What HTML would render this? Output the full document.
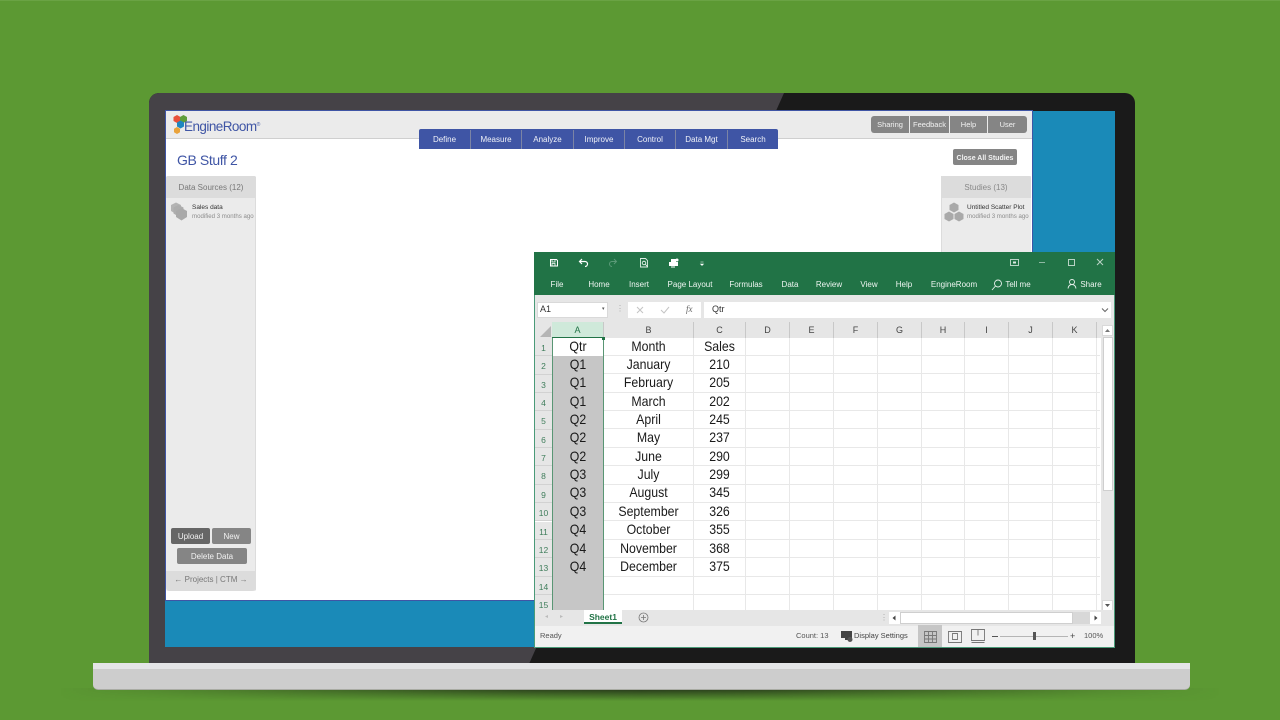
<!DOCTYPE html>
<html><head><meta charset="utf-8"><style>
*{box-sizing:border-box}
html,body{margin:0;padding:0}
body{width:1280px;height:720px;position:relative;overflow:hidden;background:#5c9933;font-family:"Liberation Sans",sans-serif}
.a,.t{position:absolute}
.t{white-space:nowrap;line-height:1}
.c{transform:translateX(-50%)}
.btn{position:absolute;background:#858585;color:#f2f2f2;font-size:7.5px;font-weight:400;text-align:center;border-radius:2px}
.nav{position:absolute;top:130px;height:19px;line-height:20px;color:#f0f2f8;font-size:8px;text-align:center;border-right:1px solid #7b84a5}
.rib{position:absolute;top:285px;transform:translate(-50%,-50%);font-size:8px;color:#eef5f1;white-space:nowrap;line-height:1}
.h{position:absolute;top:322px;height:16px;line-height:17px;text-align:center;font-size:9px;color:#444;background:#e6e6e6;border-right:1px solid #c8c8c8}
.rn{position:absolute;left:535px;width:17px;height:18.35px;background:#e6e6e6;color:#3f7d5b;font-size:8.5px;text-align:center;line-height:20px;border-bottom:1px solid #d2d2d2}
.q,.m,.s{position:absolute;height:18px;line-height:17px;text-align:center;font-size:14px;color:#1a1a1a;transform:scaleX(.88)}
.q{left:553px;width:50px}
.m{left:604px;width:89px}
.s{left:694px;width:51px}
.hl{position:absolute;left:604px;width:496px;height:1px;background:#e8e8e8}
.vl{position:absolute;top:338px;height:272px;width:1px;background:#e8e8e8}
</style></head><body>

<!-- shadow -->
<div class="a" style="left:60px;top:688px;width:1160px;height:13px;background:linear-gradient(to bottom,#2a3f1c 0%,#2a3f1c 15%,rgba(42,63,28,0) 100%);-webkit-mask-image:linear-gradient(to right,transparent 0%,rgba(0,0,0,.15) 8%,rgba(0,0,0,.9) 40%,#000 50%,rgba(0,0,0,.9) 60%,rgba(0,0,0,.15) 90%,transparent 100%);mask-image:linear-gradient(to right,transparent 0%,rgba(0,0,0,.15) 8%,rgba(0,0,0,.9) 40%,#000 50%,rgba(0,0,0,.9) 60%,rgba(0,0,0,.15) 90%,transparent 100%)"></div>
<div class="a" style="left:0;top:0;width:1280px;height:1px;background:#6aa344"></div>

<!-- laptop bezel -->
<svg class="a" style="left:149px;top:93px" width="986" height="571" viewBox="0 0 986 571">
<path d="M10 0H976a10 10 0 0 1 10 10V571H0V10A10 10 0 0 1 10 0Z" fill="#1a1a1a"/>
<path d="M10 0H635L380 571H0V10A10 10 0 0 1 10 0Z" fill="#454247"/>
</svg>
<!-- base -->
<div class="a" style="left:93px;top:663px;width:1097px;height:27px;background:#cdcdcd;border-radius:0 0 5px 5px;border-bottom:1px solid #a9aba3"></div>
<div class="a" style="left:93px;top:663px;width:1097px;height:6px;background:#e4e5e7"></div>

<!-- screen -->
<div class="a" style="left:165px;top:111px;width:950px;height:536px;background:#1a8ab8"></div>

<!-- app -->
<div class="a" style="left:165px;top:110px;width:868px;height:491px;background:#fff;border:1px solid #3f55a5"></div>
<div class="a" style="left:166px;top:111px;width:866px;height:28px;background:#ebebeb;border-bottom:1px solid #cfcfcf"></div>

<!-- logo -->
<svg class="a" style="left:172px;top:114px" width="22" height="22" viewBox="0 0 22 22">
<polygon points="5,1 8.500,3 8.500,7 5,9 1.500,7 1.500,3" fill="#e8503a"/>
<polygon points="11.500,1 15,3 15,7 11.500,9 8,7 8,3" fill="#5f9e3a"/>
<polygon points="8.500,6.500 12,8.500 12,12.500 8.500,14.500 5,12.500 5,8.500" fill="#1f87c0"/>
<polygon points="5,13 8,14.800 8,18.200 5,20 2,18.200 2,14.800" fill="#e9a23a"/>
</svg>
<div class="t" style="left:184px;top:120px;font-size:13.5px;color:#3f55a5;letter-spacing:-.55px">EngineRoom<span style="font-size:5px;vertical-align:5px">®</span></div>

<div class="t" style="left:177px;top:153px;font-size:14px;color:#3f55a5;letter-spacing:-.4px">GB Stuff 2</div>

<!-- nav -->
<div class="a" style="left:419px;top:129px;width:359px;height:20px;background:#3f55a5;border-radius:2px 2px 0 0"></div>
<div class="nav" style="left:419px;width:52px">Define</div>
<div class="nav" style="left:471px;width:51px">Measure</div>
<div class="nav" style="left:522px;width:52px">Analyze</div>
<div class="nav" style="left:574px;width:51px">Improve</div>
<div class="nav" style="left:625px;width:51px">Control</div>
<div class="nav" style="left:676px;width:52px">Data Mgt</div>
<div class="nav" style="left:728px;width:50px;border-right:0">Search</div>

<!-- top right buttons -->
<div class="btn" style="left:871px;top:116px;width:38px;height:17px;line-height:18px;border-radius:3px 0 0 3px">Sharing</div>
<div class="btn" style="left:910px;top:116px;width:39px;height:17px;line-height:18px;border-radius:0">Feedback</div>
<div class="btn" style="left:950px;top:116px;width:37px;height:17px;line-height:18px;border-radius:0">Help</div>
<div class="btn" style="left:988px;top:116px;width:39px;height:17px;line-height:18px;border-radius:0 3px 3px 0">User</div>
<div class="btn" style="left:953px;top:149px;width:64px;height:16px;line-height:16px;font-weight:700;font-size:7px;white-space:nowrap;padding-top:1px"><span style="position:relative;top:1px">Close All Studies</span></div>

<!-- left panel -->
<div class="a" style="left:166px;top:176px;width:90px;height:415px;background:#ebebeb;border-radius:2px;border-right:1px solid #dcdcdc"></div>
<div class="a" style="left:166px;top:176px;width:90px;height:22px;background:#dcdcdc;border-radius:2px 2px 0 0"></div>
<div class="t c" style="left:211px;top:184px;font-size:8px;color:#777">Data Sources (12)</div>
<svg class="a" style="left:170px;top:202px" width="20" height="20" viewBox="0 0 20 20">
<polygon points="6,0.500 11,3 11,9 6,12 1,9 1,3" fill="#b4b4b4"/>
<polygon points="8.500,3 13.500,5.500 13.500,11.500 8.500,14.500 3.500,11.500 3.500,5.500" fill="#adadad"/>
<polygon points="11.500,6 17,9 17,15 11.500,18.500 6,15 6,9" fill="#a9a9a9"/>
</svg>
<div class="t" style="left:192px;top:205px;font-size:6.5px;color:#333">Sales data</div>
<div class="t" style="left:192px;top:214px;font-size:6.1px;color:#8c8c8c">modified 3 months ago</div>
<div class="btn" style="left:171px;top:528px;width:39px;height:16px;line-height:18px;background:#666;font-size:8px">Upload</div>
<div class="btn" style="left:212px;top:528px;width:39px;height:16px;line-height:18px;font-size:8px">New</div>
<div class="btn" style="left:177px;top:548px;width:70px;height:16px;line-height:18px;font-size:8px">Delete Data</div>
<div class="a" style="left:166px;top:571px;width:90px;height:20px;background:#dcdcdc;border-radius:0 0 4px 4px"></div>
<div class="t c" style="left:211px;top:576px;font-size:8px;color:#777">← Projects | CTM →</div>

<!-- right panel -->
<div class="a" style="left:941px;top:176px;width:90px;height:80px;background:#ebebeb;border-left:1px solid #dcdcdc"></div>
<div class="a" style="left:941px;top:176px;width:90px;height:22px;background:#dcdcdc;border-radius:2px 2px 0 0"></div>
<div class="t c" style="left:986px;top:184px;font-size:8px;color:#888">Studies (13)</div>
<svg class="a" style="left:943px;top:202px" width="22" height="20" viewBox="0 0 22 20">
<polygon points="11,0.500 15.500,3 15.500,8 11,10.500 6.500,8 6.500,3" fill="#a9a9a9"/>
<polygon points="6,9.500 10.500,12 10.500,17 6,19.500 1.500,17 1.500,12" fill="#a9a9a9"/>
<polygon points="16,9.500 20.500,12 20.500,17 16,19.500 11.500,17 11.500,12" fill="#a9a9a9"/>
</svg>
<div class="t" style="left:967px;top:205px;font-size:6.5px;color:#333">Untitled Scatter Plot</div>
<div class="t" style="left:967px;top:214px;font-size:6.1px;color:#8c8c8c">modified 3 months ago</div>

<!-- EXCEL -->
<div class="a" style="left:534px;top:252px;width:581px;height:396px;background:#fff;border:1px solid #4a9a78;border-top:0"></div>
<div class="a" style="left:534px;top:252px;width:581px;height:43px;background:#217346"></div>

<!-- QAT icons -->
<svg class="a" style="left:534px;top:252px" width="190" height="20" viewBox="0 0 190 20" fill="none" stroke="#fff" stroke-width="1">
<path d="M16.500 7.500h6l1 1v5.500h-7z"/><path d="M18 8v2h3V8M18 14v-2.500h3V14" stroke-width=".8"/>
<path d="M46 9.500h5a2.500 2.500 0 0 1 0 5M48 7l-2.500 2.500L48 12" stroke-width="1.200"/>
<path d="M82 9.500h-4a2.500 2.500 0 0 0 0 5M80 7l2.500 2.500L80 12" stroke="#5b9a78"/>
<path d="M106.500 6.500h5l2 2v6.500h-7z" stroke="#dfeee6" stroke-width=".9"/><circle cx="110" cy="11" r="1.800" stroke-width=".8"/><path d="M111.500 12.500l2 2" stroke-width=".8"/>
<path d="M135 10h9v4h-9z M137 7h5v3h-5z" fill="#fff" stroke="none"/><circle cx="143" cy="8" r="1.500" fill="#fff" stroke="none"/><path d="M137 15h4" stroke-width="1"/>
<path d="M166.500 10h3M166.500 12h3l-1.500 1.500z" stroke-width=".6" fill="#fff"/>
</svg>
<!-- window controls -->
<svg class="a" style="left:1000px;top:252px" width="115" height="20" viewBox="0 0 115 20" fill="none" stroke="#b9d3c5" stroke-width="1">
<rect x="10.500" y="7.500" width="8" height="6" /><rect x="13" y="9.500" width="3" height="2" fill="#dce9e2" stroke="none"/>
<path d="M39 10.500h6" stroke="#8fb9a3"/>
<rect x="68.500" y="7.500" width="6" height="6"/>
<path d="M97 7l6 6M103 7l-6 6"/>
</svg>

<div class="rib" style="left:557px">File</div>
<div class="rib" style="left:599px">Home</div>
<div class="rib" style="left:639px">Insert</div>
<div class="rib" style="left:690px">Page Layout</div>
<div class="rib" style="left:746px">Formulas</div>
<div class="rib" style="left:790px">Data</div>
<div class="rib" style="left:829px">Review</div>
<div class="rib" style="left:869px">View</div>
<div class="rib" style="left:904px">Help</div>
<div class="rib" style="left:954px">EngineRoom</div>
<svg class="a" style="left:990px;top:278px" width="14" height="14" viewBox="0 0 14 14" fill="none" stroke="#e6f0eb" stroke-width=".9"><circle cx="8" cy="5.500" r="3.500"/><path d="M5.500 8L2 12"/></svg>
<div class="rib" style="left:1018px">Tell me</div>
<svg class="a" style="left:1066px;top:278px" width="12" height="12" viewBox="0 0 12 12" fill="none" stroke="#e6f0eb" stroke-width=".9"><circle cx="6" cy="4" r="2.500"/><path d="M2 10.500c.5-3 2-4 4-4s3.500 1 4 4"/></svg>
<div class="rib" style="left:1091px">Share</div>

<!-- formula bar -->
<div class="a" style="left:535px;top:295px;width:579px;height:27px;background:#e6e6e6"></div>
<div class="a" style="left:537px;top:302px;width:71px;height:16px;background:#fff;border:1px solid #d9d9d9"></div>
<div class="t" style="left:540px;top:305px;font-size:9px;color:#333">A1</div>
<div class="t" style="left:602px;top:307px;font-size:5px;color:#555">▾</div>
<div class="t" style="left:616px;top:305px;font-size:8px;color:#aaa">⋮</div>
<div class="a" style="left:628px;top:302px;width:73px;height:16px;background:#fff"></div>
<svg class="a" style="left:628px;top:302px" width="73" height="16" viewBox="0 0 73 16" fill="none" stroke="#c4c4c4"><path d="M9 5l6 6M15 5l-6 6M33 8l3 3 5-6"/></svg>
<div class="t" style="left:686px;top:305px;font-size:9px;color:#666;font-style:italic;font-family:'Liberation Serif',serif">fx</div>
<div class="a" style="left:704px;top:302px;width:407px;height:16px;background:#fff"></div>
<div class="t" style="left:712px;top:305px;font-size:9px;color:#333">Qtr</div>
<svg class="a" style="left:1101px;top:306px" width="8" height="8" viewBox="0 0 8 8" fill="none" stroke="#666"><path d="M1 2.500l3 3 3-3"/></svg>

<!-- headers -->
<div class="a" style="left:535px;top:322px;width:566px;height:16px;background:#e6e6e6"></div>
<svg class="a" style="left:535px;top:322px" width="17" height="16"><polygon points="16,4 16,15 5,15" fill="#b5b5b5"/></svg>
<div class="h" style="left:552px;width:52px;background:#cfe9da;color:#217346;border-bottom:1px solid #217346">A</div>
<div class="h" style="left:604px;width:90px">B</div>
<div class="h" style="left:694px;width:52px">C</div>
<div class="h" style="left:746px;width:44px">D</div>
<div class="h" style="left:790px;width:44px">E</div>
<div class="h" style="left:834px;width:44px">F</div>
<div class="h" style="left:878px;width:44px">G</div>
<div class="h" style="left:922px;width:43px">H</div>
<div class="h" style="left:965px;width:44px">I</div>
<div class="h" style="left:1009px;width:44px">J</div>
<div class="h" style="left:1053px;width:44px;">K</div>

<!-- grid -->
<div class="vl" style="left:693px"></div><div class="vl" style="left:745px"></div><div class="vl" style="left:789px"></div><div class="vl" style="left:833px"></div><div class="vl" style="left:877px"></div><div class="vl" style="left:921px"></div><div class="vl" style="left:964px"></div><div class="vl" style="left:1008px"></div><div class="vl" style="left:1052px"></div><div class="vl" style="left:1096px"></div>
<div class="hl" style="top:355px"></div><div class="hl" style="top:373px"></div><div class="hl" style="top:392px"></div><div class="hl" style="top:410px"></div><div class="hl" style="top:428px"></div><div class="hl" style="top:447px"></div><div class="hl" style="top:465px"></div><div class="hl" style="top:484px"></div><div class="hl" style="top:502px"></div><div class="hl" style="top:520px"></div><div class="hl" style="top:539px"></div><div class="hl" style="top:557px"></div><div class="hl" style="top:576px"></div><div class="hl" style="top:594px"></div>

<!-- row nums -->
<div class="rn" style="top:338px">1</div><div class="rn" style="top:356.400px">2</div><div class="rn" style="top:374.700px">3</div><div class="rn" style="top:393px">4</div><div class="rn" style="top:411.400px">5</div><div class="rn" style="top:429.700px">6</div><div class="rn" style="top:448.100px">7</div><div class="rn" style="top:466.400px">8</div><div class="rn" style="top:484.800px">9</div><div class="rn" style="top:503.100px">10</div><div class="rn" style="top:521.500px">11</div><div class="rn" style="top:539.800px">12</div><div class="rn" style="top:558.200px">13</div><div class="rn" style="top:576.500px">14</div><div class="rn" style="top:594.900px;height:16px">15</div>

<!-- col A -->
<div class="a" style="left:553px;top:338px;width:50px;height:272px;background:#c6c6c6"></div>
<div class="a" style="left:553px;top:338px;width:50px;height:18px;background:#fff"></div>
<div class="q" style="top:338px">Qtr</div>
<div class="q" style="top:356px">Q1</div><div class="q" style="top:374px">Q1</div><div class="q" style="top:393px">Q1</div><div class="q" style="top:411px">Q2</div><div class="q" style="top:429px">Q2</div><div class="q" style="top:448px">Q2</div><div class="q" style="top:466px">Q3</div><div class="q" style="top:484px">Q3</div><div class="q" style="top:503px">Q3</div><div class="q" style="top:521px">Q4</div><div class="q" style="top:540px">Q4</div><div class="q" style="top:558px">Q4</div>
<div class="a" style="left:552px;top:338px;width:1px;height:272px;background:#217346;opacity:.75"></div>
<div class="a" style="left:603px;top:338px;width:1px;height:272px;background:#217346;opacity:.75"></div>
<div class="a" style="left:602px;top:337px;width:3px;height:3px;background:#217346"></div>

<!-- col B -->
<div class="m" style="top:338px">Month</div><div class="m" style="top:356px">January</div><div class="m" style="top:374px">February</div><div class="m" style="top:393px">March</div><div class="m" style="top:411px">April</div><div class="m" style="top:429px">May</div><div class="m" style="top:448px">June</div><div class="m" style="top:466px">July</div><div class="m" style="top:484px">August</div><div class="m" style="top:503px">September</div><div class="m" style="top:521px">October</div><div class="m" style="top:540px">November</div><div class="m" style="top:558px">December</div>
<!-- col C -->
<div class="s" style="top:338px">Sales</div><div class="s" style="top:356px">210</div><div class="s" style="top:374px">205</div><div class="s" style="top:393px">202</div><div class="s" style="top:411px">245</div><div class="s" style="top:429px">237</div><div class="s" style="top:448px">290</div><div class="s" style="top:466px">299</div><div class="s" style="top:484px">345</div><div class="s" style="top:503px">326</div><div class="s" style="top:521px">355</div><div class="s" style="top:540px">368</div><div class="s" style="top:558px">375</div>

<!-- v scrollbar -->
<div class="a" style="left:1101px;top:322px;width:13px;height:289px;background:#e6e6e6"></div>
<div class="a" style="left:1102px;top:325px;width:11px;height:11px;background:#fff;border:1px solid #d9d9d9"></div>
<div class="a" style="left:1103px;top:337px;width:10px;height:154px;background:#fff;border:1px solid #cfcfcf"></div>
<div class="a" style="left:1102px;top:600px;width:11px;height:11px;background:#fff;border:1px solid #d9d9d9"></div>
<svg class="a" style="left:1102px;top:325px" width="11" height="286"><path d="M3 7l2.500-3 2.500 3z" fill="#777"/><path d="M3 279l2.500 3 2.500-3z" fill="#555"/></svg>

<!-- sheet tabs -->
<div class="a" style="left:535px;top:610px;width:579px;height:16px;background:#e6e6e6"></div>
<div class="t" style="left:545px;top:614px;font-size:6px;color:#bbb">◂</div>
<div class="t" style="left:560px;top:614px;font-size:6px;color:#bbb">▸</div>
<div class="a" style="left:584px;top:610px;width:38px;height:14px;background:#fff;border-bottom:2px solid #217346;text-align:center;font-size:8.5px;font-weight:700;color:#217346;line-height:14px">Sheet1</div>
<svg class="a" style="left:638px;top:612px" width="11" height="11" fill="none" stroke="#777" stroke-width=".8"><circle cx="5.500" cy="5.500" r="4.500"/><path d="M3 5.500h5M5.500 3v5"/></svg>
<div class="t" style="left:880px;top:614px;font-size:8px;color:#aaa">⋮</div>
<div class="a" style="left:889px;top:612px;width:212px;height:12px;background:#d8d8d8"></div>
<div class="a" style="left:889px;top:612px;width:11px;height:12px;background:#fff"></div>
<div class="a" style="left:900px;top:612px;width:173px;height:12px;background:#fff;border:1px solid #cfcfcf"></div>
<div class="a" style="left:1090px;top:612px;width:11px;height:12px;background:#fff"></div>
<svg class="a" style="left:889px;top:612px" width="212" height="12"><path d="M6.500 3.500v5l-3-2.500z" fill="#444"/><path d="M205.500 3.500v5l3-2.500z" fill="#444"/></svg>

<!-- status bar -->
<div class="a" style="left:535px;top:626px;width:579px;height:21px;background:#f1f1f1"></div>
<div class="t" style="left:540px;top:632px;font-size:7.5px;color:#555">Ready</div>
<div class="t" style="left:796px;top:632px;font-size:7.5px;color:#555">Count: 13</div>
<svg class="a" style="left:840px;top:630px" width="14" height="13"><rect x="1" y="1" width="11" height="7" fill="#444"/><rect x="5" y="8" width="3" height="2" fill="#444"/><circle cx="10" cy="9.500" r="2.500" fill="#555"/></svg>
<div class="t" style="left:854px;top:632px;font-size:7.5px;color:#444">Display Settings</div>
<div class="a" style="left:918px;top:625px;width:24px;height:22px;background:#c6c6c6"></div>
<svg class="a" style="left:918px;top:625px" width="90" height="22" fill="none" stroke="#777" stroke-width=".9">
<path d="M6.500 6.500h12v11h-12zM10.500 6.500v11M14.500 6.500v11M6.500 10.500h12M6.500 14h12"/>
<path d="M30.500 6.500h13v11h-13z"/><path d="M34.500 8.500h5v6h-5z"/>
<path d="M53.500 4.500h13v11h-13zM60 4.500v6M53.500 17.500h13"/>
</svg>
<div class="a" style="left:992px;top:636px;width:6px;height:1px;background:#555"></div>
<div class="a" style="left:1000px;top:636px;width:68px;height:1px;background:#b5b5b5"></div>
<div class="a" style="left:1033px;top:632px;width:3px;height:8px;background:#555"></div>
<div class="t" style="left:1070px;top:632px;font-size:9px;color:#444">+</div>
<div class="t" style="left:1084px;top:632px;font-size:7.5px;color:#555">100%</div>
</body></html>
